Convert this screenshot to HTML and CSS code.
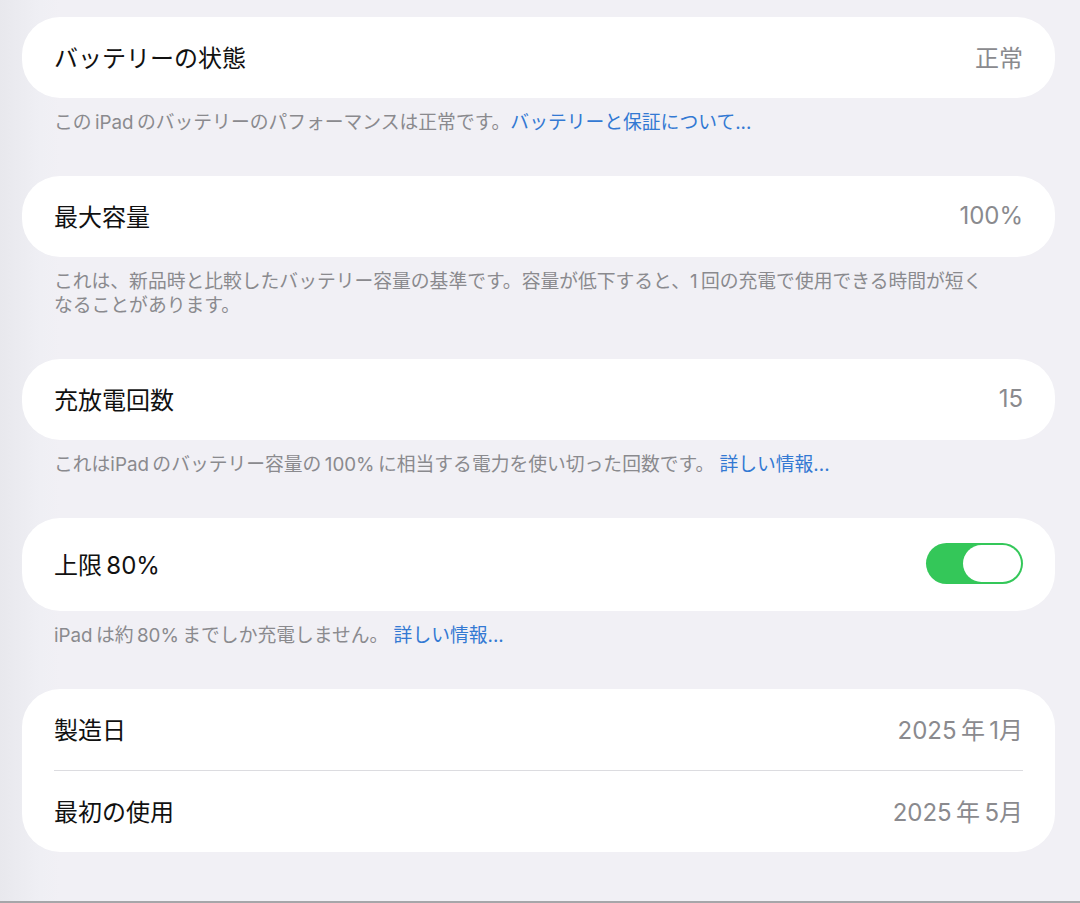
FILE: index.html
```html
<!DOCTYPE html>
<html lang="ja">
<head>
<meta charset="utf-8">
<title>バッテリー</title>
<link rel="stylesheet" href="styles.css">
</head>
<body>
<main class="page">
  <section class="group">
    <div class="card">
      <div class="row"><span class="label">バッテリーの状態</span><span class="value">正常</span></div>
    </div>
    <p class="footer">この&thinsp;iPad&thinsp;のバッテリーのパフォーマンスは正常です。<a class="link">バッテリーと保証について...</a></p>
  </section>

  <section class="group">
    <div class="card">
      <div class="row"><span class="label">最大容量</span><span class="value">100%</span></div>
    </div>
    <p class="footer">これは、新品時と比較したバッテリー容量の基準です。容量が低下すると、1&thinsp;回の充電で使用できる時間が短く<br>なることがあります。</p>
  </section>

  <section class="group">
    <div class="card">
      <div class="row"><span class="label">充放電回数</span><span class="value">15</span></div>
    </div>
    <p class="footer">これはiPad&thinsp;のバッテリー容量の&thinsp;100%&thinsp;に相当する電力を使い切った回数です。 <a class="link">詳しい情報...</a></p>
  </section>

  <section class="group">
    <div class="card">
      <div class="row row-tall"><span class="label">上限&thinsp;80%</span><span class="toggle"><span class="knob"></span></span></div>
    </div>
    <p class="footer">iPad&thinsp;は約&thinsp;80%&thinsp;までしか充電しません。 <a class="link">詳しい情報...</a></p>
  </section>

  <section class="group">
    <div class="card">
      <div class="row"><span class="label">製造日</span><span class="value">2025&thinsp;年&thinsp;1月</span></div>
      <div class="row"><span class="label">最初の使用</span><span class="value">2025&thinsp;年&thinsp;5月</span></div>
    </div>
  </section>
</main>
</body>
</html>
```

FILE: styles.css
```css
html, body {
  margin: 0;
  padding: 0;
}

body {
  background: #f1f0f5;
  font-family: Inter, "Noto Sans CJK JP", sans-serif;
  color: #111;
}

.page {
  box-sizing: border-box;
  height: 903px;
  padding: 17px 25px 0 22px;
  background: linear-gradient(to right, #e8e8ed 0, #efeff4 40px, #f1f0f5 60px);
  border-bottom: 2px solid #a6a6a9;
  overflow: hidden;
}

.group {
  margin: 0;
}

.card {
  background: #ffffff;
  border-radius: 38px;
  padding: 0 32px;
}

.row {
  display: flex;
  align-items: center;
  justify-content: space-between;
  box-sizing: border-box;
  height: 81px;
  padding-bottom: 3px;
}

.row + .row {
  border-top: 1px solid #dcdce0;
  height: 82px;
}

.row-tall {
  height: 93px;
  padding-bottom: 2px;
}

.label {
  font-size: 24px;
  color: #111;
}

.value {
  font-size: 24px;
  color: #8a8a8e;
}

.footer {
  margin: 0;
  padding: 13px 32px 41px;
  font-size: 18.8px;
  line-height: 24px;
  color: #8a8a8e;
}

.link {
  color: #3379d3;
}

.toggle {
  display: flex;
  justify-content: flex-end;
  align-items: center;
  box-sizing: border-box;
  width: 97px;
  height: 41px;
  padding: 2px;
  border-radius: 21px;
  background: #34c759;
}

.knob {
  display: block;
  width: 58px;
  height: 37px;
  border-radius: 19px;
  background: #ffffff;
}
```
